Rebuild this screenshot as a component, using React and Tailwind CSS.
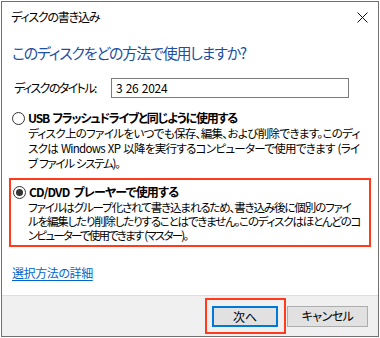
const Radio = ({ checked }) => (
  <span className="w-[13px] h-[13px] rounded-full border border-[#333333] bg-white flex items-center justify-center shrink-0">
    {checked && <span className="w-[7px] h-[7px] rounded-full bg-[#333333]" />}
  </span>
);

// tracking differs per line so the breaks land where the dialog has them
const Line = ({ t, children }) => <div className={`whitespace-nowrap [word-spacing:1px] ${t}`}>{children}</div>;

export default function App() {
  return (
    <div className="w-[380px] h-[338px] bg-white p-px font-['Noto_Sans_CJK_JP','Noto_Sans',sans-serif] text-black [font-feature-settings:'palt']">
      <div className="h-full border border-[#707070] flex flex-col">
        {/* title bar */}
        <div className="h-[30px] flex items-center justify-between pl-[9px] pr-[10px] text-[12px]">
          <span className="tracking-[-1.2px] whitespace-nowrap">ディスクの書き込み</span>
          <svg width="11" height="11" viewBox="0 0 11 11" stroke="#111" strokeWidth="1" fill="none">
            <path d="M0.5 0.5 L10.5 10.5 M10.5 0.5 L0.5 10.5" />
          </svg>
        </div>

        <div className="mt-[11px] pl-[10px] h-[20px] leading-[20px] text-[15px] tracking-[-1.2px] text-[#1e50a2] whitespace-nowrap">
          このディスクをどの方法で使用しますか?
        </div>

        <div className="mt-[15px] h-[20px] flex items-center text-[12px]">
          <span className="pl-[12px] w-[109px] tracking-[-1.6px] whitespace-nowrap">ディスクのタイトル:</span>
          <div className="w-[238px] h-[20px] border border-[#7a7a7a] flex items-center pl-[4px] tracking-[-0.3px] [word-spacing:1px]">3 26 2024</div>
        </div>

        <div className="mt-[12px] pl-[10px] text-[12px]">
          <div className="h-[16px] flex items-center gap-[3px]">
            <Radio />
            <span className="font-bold tracking-[-1.2px] [word-spacing:2px] whitespace-nowrap">USB フラッシュドライブと同じように使用する</span>
          </div>
          <div className="pl-[16px] leading-[15px] text-[11.5px]">
            <Line t="tracking-[-0.65px]">ディスク上のファイルをいつでも保存、編集、および削除できます。このディ</Line>
            <Line t="tracking-[-0.7px]">スクは Windows XP 以降を実行するコンピューターで使用できます (ライ</Line>
            <Line t="tracking-[-1.3px]">ブ ファイル システム)。</Line>
          </div>
        </div>

        <div className="mt-[7px] ml-[7px] w-[362px] border-2 border-[#ff3b1f] pt-[4px] pb-[3px] pl-[2px] text-[12px]">
          <div className="h-[16px] flex items-center gap-[3px]">
            <Radio checked />
            <span className="font-bold tracking-[-0.8px] [word-spacing:2px] whitespace-nowrap">CD/DVD プレーヤーで使用する</span>
          </div>
          <div className="pl-[15px] leading-[14px] text-[11.5px]">
            <Line t="tracking-[-1.12px]">ファイルはグループ化されて書き込まれるため、書き込み後に個別のファイ</Line>
            <Line t="tracking-[-1.2px]">ルを編集したり削除したりすることはできません。このディスクはほとんどのコ</Line>
            <Line t="tracking-[-1.8px]">ンピューターで使用できます (マスター)。</Line>
          </div>
        </div>

        <div className="mt-[18px] pl-[10px] h-[16px] leading-[16px] text-[12px] tracking-[-0.4px]">
          <a className="text-[#0066cc] underline underline-offset-2">選択方法の詳細</a>
        </div>

        <div className="mt-auto h-[41px] border-t border-[#dfdfdf] bg-[#f0f0f0] flex items-center justify-end pr-[10px] text-[12px]">
          <div className="border-2 border-[#ff3b1f] pl-[5px] pr-[6px] pt-[6px] pb-[5px] mr-px">
            <button className="w-[66px] h-[21px] border-2 border-[#0078d7] bg-[#e1e1e1] flex items-center justify-center">
              次へ
            </button>
          </div>
          <button className="w-[81px] h-[21px] border border-[#adadad] bg-[#e1e1e1] flex items-center justify-center tracking-[-0.5px]">
            キャンセル
          </button>
        </div>
      </div>
    </div>
  );
}
